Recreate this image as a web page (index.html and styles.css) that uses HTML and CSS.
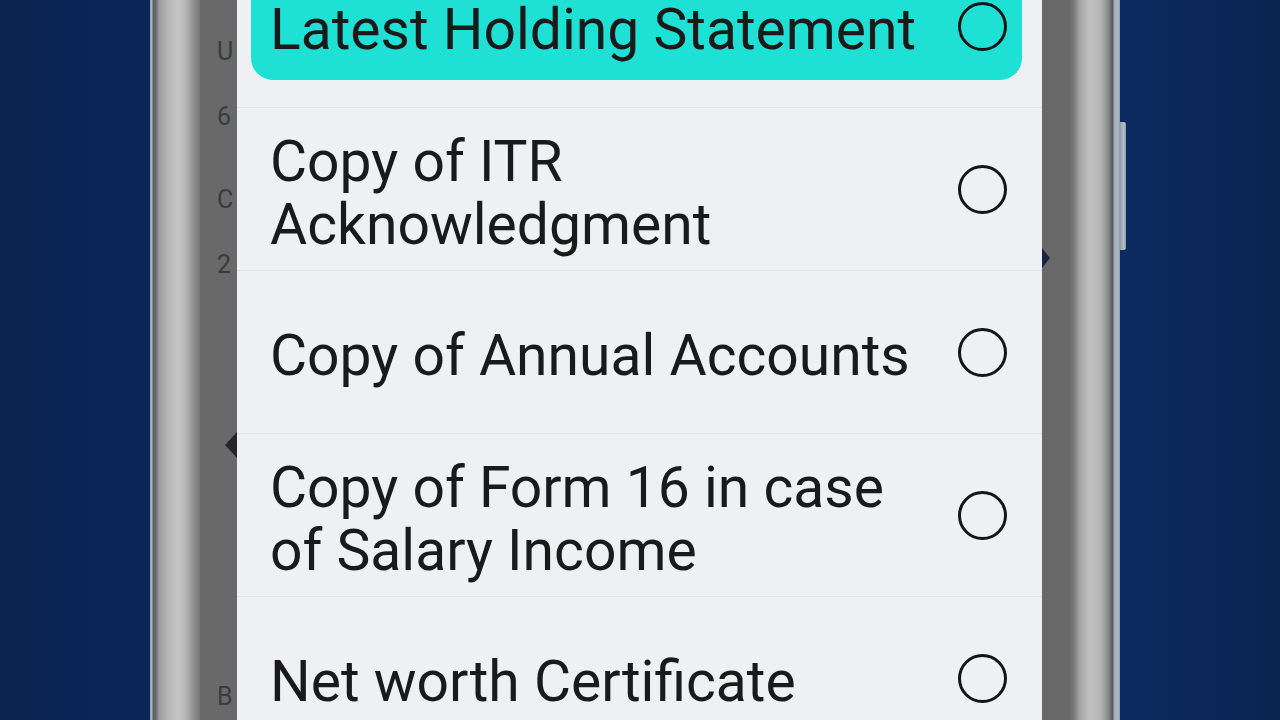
FILE: index.html
```html
<!DOCTYPE html>
<html lang="en">
<head>
<meta charset="utf-8">
<title>Document type</title>
<link rel="stylesheet" href="styles.css">
</head>
<body>
<div class="stage">
  <div class="backdrop backdrop-left"></div>
  <div class="phone">
    <div class="bezel bezel-left"></div>
    <div class="screen">
      <div class="underlay underlay-left">
        <span class="ghost g-u">U</span>
        <span class="ghost g-6">6</span>
        <span class="ghost g-c">C</span>
        <span class="ghost g-2">2</span>
        <span class="ghost-arrow-left"></span>
        <span class="ghost g-b">B</span>
      </div>
      <div class="dialog">
        <ul class="options">
          <li class="option">
            <div class="option-inner selected">
              <span class="label">Latest Holding Statement</span>
              <span class="radio"></span>
            </div>
          </li>
          <li class="option">
            <div class="option-inner">
              <span class="label">Copy of ITR Acknowledgment</span>
              <span class="radio"></span>
            </div>
          </li>
          <li class="option">
            <div class="option-inner">
              <span class="label">Copy of Annual Accounts</span>
              <span class="radio"></span>
            </div>
          </li>
          <li class="option">
            <div class="option-inner">
              <span class="label">Copy of Form 16 in case of Salary Income</span>
              <span class="radio"></span>
            </div>
          </li>
          <li class="option">
            <div class="option-inner">
              <span class="label">Net worth Certificate</span>
              <span class="radio"></span>
            </div>
          </li>
        </ul>
      </div>
      <div class="underlay underlay-right">
        <span class="ghost-arrow-right"></span>
      </div>
    </div>
    <div class="bezel bezel-right"></div>
    <div class="side-button"></div>
  </div>
  <div class="backdrop backdrop-right"></div>
</div>
</body>
</html>
```
FILE: styles.css
```css
html, body {
  margin: 0;
  padding: 0;
}

body {
  width: 1280px;
  height: 720px;
  overflow: hidden;
  background: #0a2656;
  font-family: Roboto, "Noto Sans", "Liberation Sans", sans-serif;
}

.stage {
  display: flex;
  width: 1280px;
  height: 720px;
  background: linear-gradient(90deg, #0a2350 0%, #0b275a 12%, #0c2a5e 88%, #0a2552 100%);
}

.backdrop-left {
  width: 150px;
  flex-shrink: 0;
}

.backdrop-right {
  flex: 1;
}

.phone {
  position: relative;
  display: flex;
  width: 970px;
  height: 720px;
  flex-shrink: 0;
}

.bezel {
  width: 50px;
  height: 100%;
  flex-shrink: 0;
}

.bezel-left {
  background: linear-gradient(90deg,
    #9fabb7 0px, #aab4be 2px, #5c5e60 3px, #6a6a6a 6px,
    #9c9c9c 9px, #b6b6b6 18px, #c6c6c6 28px, #b4b4b4 36px,
    #8e8e8e 44px, #767676 50px);
}

.bezel-right {
  background: linear-gradient(90deg,
    #6c6c6c 0px, #7a7a7a 4px, #a6a6a6 10px, #c0c0c0 20px,
    #b8b8b8 30px, #8c8c8c 38px, #5e5e5e 42px, #5a5a5a 43px,
    #a2acb6 44px, #b0bac4 48px, #8c9aa8 50px);
}

.side-button {
  position: absolute;
  right: -6px;
  top: 122px;
  width: 6px;
  height: 128px;
  border-radius: 0 2px 2px 0;
  background: linear-gradient(90deg, #8f9ba8, #b4bec8 60%, #8f9ba8);
}

.screen {
  display: flex;
  width: 870px;
  height: 720px;
  background: #696969;
  overflow: hidden;
}

.underlay {
  height: 100%;
  flex-shrink: 0;
  overflow: hidden;
  position: relative;
  display: flex;
  flex-direction: column;
}

.underlay-left {
  width: 37px;
  padding-left: 17px;
  box-sizing: border-box;
}

.underlay-right {
  width: 28px;
}

.ghost {
  display: block;
  font-size: 25px;
  line-height: 26px;
  height: 26px;
  color: #3b3b3b;
  white-space: nowrap;
}

.g-u { margin-top: 39px; }
.g-6 { margin-top: 39px; }
.g-c { margin-top: 57px; }
.g-2 { margin-top: 39px; }
.g-b { margin-top: 226px; }

.ghost-arrow-left {
  display: block;
  width: 0;
  height: 0;
  margin-top: 154px;
  margin-left: 8px;
  border-top: 13px solid transparent;
  border-bottom: 13px solid transparent;
  border-right: 12px solid #262626;
}

.ghost-arrow-right {
  display: block;
  width: 0;
  height: 0;
  margin-top: 248px;
  border-top: 10px solid transparent;
  border-bottom: 10px solid transparent;
  border-left: 8px solid #1c2446;
}

.dialog {
  width: 805px;
  height: 100%;
  flex-shrink: 0;
  background: #eef0f3;
  overflow: hidden;
}

.options {
  list-style: none;
  margin: -55px 0 0;
  padding: 0;
}

.option {
  display: flex;
  align-items: center;
  height: 163px;
  box-sizing: border-box;
  padding: 0 20px 0 14px;
  border-bottom: 1px solid #e0e3e7;
}

.option-inner {
  flex: 1;
  display: flex;
  align-items: center;
  justify-content: space-between;
  min-height: 107px;
  padding: 0 15px 0 19px;
  border-radius: 22px;
}

.option-inner.selected {
  background: #1fe0d5;
}

.label {
  flex: 1;
  margin-right: 40px;
  padding-top: 7px;
  font-size: 57px;
  line-height: 63px;
  color: #1a1a1a;
}

.radio {
  width: 49px;
  height: 49px;
  box-sizing: border-box;
  border: 3px solid #151515;
  border-radius: 50%;
  flex-shrink: 0;
}
```
